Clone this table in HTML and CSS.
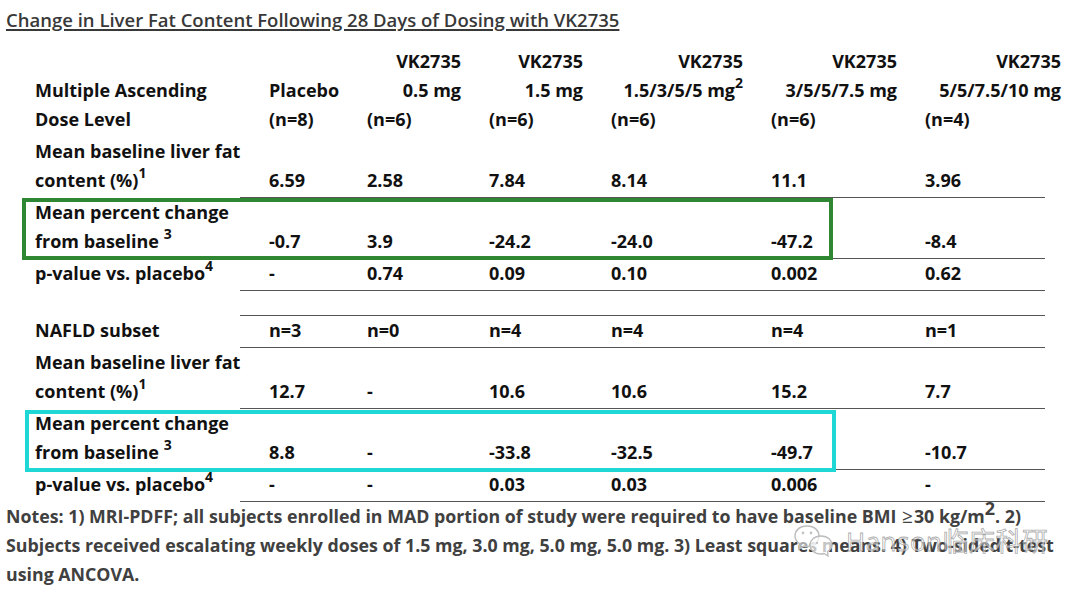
FILE: index.html
```html
<!DOCTYPE html>
<html>
<head>
<meta charset="utf-8">
<link rel="stylesheet" href="styles.css">
</head>
<body>
<div class="page">
  <div class="title">Change in Liver Fat Content Following 28 Days of Dosing with VK2735</div>

  <div class="table">
    <div class="row head">
      <div class="cell label"><div class="blank"></div>Multiple Ascending<br>Dose Level</div>
      <div class="cell"><div class="blank"></div>Placebo<br>(n=8)</div>
      <div class="cell dose"><div class="r">VK2735<br>0.5 mg</div>(n=6)</div>
      <div class="cell dose"><div class="r">VK2735<br>1.5 mg</div>(n=6)</div>
      <div class="cell dose"><div class="r">VK2735<br>1.5/3/5/5 mg<span class="sup">2</span></div>(n=6)</div>
      <div class="cell dose"><div class="r">VK2735<br>3/5/5/7.5 mg</div>(n=6)</div>
      <div class="cell dose last"><div class="r">VK2735<br>5/5/7.5/10 mg</div>(n=4)</div>
    </div>

    <div class="row two gap">
      <div class="cell label">Mean baseline liver fat<br>content (%)<span class="sup">1</span></div>
      <div class="cell">6.59</div>
      <div class="cell">2.58</div>
      <div class="cell">7.84</div>
      <div class="cell">8.14</div>
      <div class="cell">11.1</div>
      <div class="cell">3.96</div>
    </div>
    <div class="rule"></div>

    <div class="row two boxed">
      <span class="box green"></span>
      <div class="cell label">Mean percent change<br>from baseline <span class="sup">3</span></div>
      <div class="cell">-0.7</div>
      <div class="cell">3.9</div>
      <div class="cell">-24.2</div>
      <div class="cell">-24.0</div>
      <div class="cell">-47.2</div>
      <div class="cell">-8.4</div>
    </div>
    <div class="rule"></div>

    <div class="row">
      <div class="cell label">p-value vs. placebo<span class="sup">4</span></div>
      <div class="cell">-</div>
      <div class="cell">0.74</div>
      <div class="cell">0.09</div>
      <div class="cell">0.10</div>
      <div class="cell">0.002</div>
      <div class="cell">0.62</div>
    </div>
    <div class="rule"></div>

    <div class="spacer"></div>
    <div class="rule"></div>

    <div class="row">
      <div class="cell label">NAFLD subset</div>
      <div class="cell">n=3</div>
      <div class="cell">n=0</div>
      <div class="cell">n=4</div>
      <div class="cell">n=4</div>
      <div class="cell">n=4</div>
      <div class="cell">n=1</div>
    </div>
    <div class="rule"></div>

    <div class="row two">
      <div class="cell label">Mean baseline liver fat<br>content (%)<span class="sup">1</span></div>
      <div class="cell">12.7</div>
      <div class="cell">-</div>
      <div class="cell">10.6</div>
      <div class="cell">10.6</div>
      <div class="cell">15.2</div>
      <div class="cell">7.7</div>
    </div>
    <div class="rule"></div>

    <div class="row two boxed">
      <span class="box cyan"></span>
      <div class="cell label">Mean percent change<br>from baseline <span class="sup">3</span></div>
      <div class="cell">8.8</div>
      <div class="cell">-</div>
      <div class="cell">-33.8</div>
      <div class="cell">-32.5</div>
      <div class="cell">-49.7</div>
      <div class="cell">-10.7</div>
    </div>
    <div class="rule"></div>

    <div class="row">
      <div class="cell label">p-value vs. placebo<span class="sup">4</span></div>
      <div class="cell">-</div>
      <div class="cell">-</div>
      <div class="cell">0.03</div>
      <div class="cell">0.03</div>
      <div class="cell">0.006</div>
      <div class="cell">-</div>
    </div>
    <div class="rule"></div>
  </div>

  <div class="notes">
    <div>Notes: 1) MRI-PDFF; all subjects enrolled in MAD portion of study were required to have baseline BMI <span class="ge">≥</span>30 kg/m<span class="sup">2</span>. 2)</div>
    <div>Subjects received escalating weekly doses of 1.5 mg, 3.0 mg, 5.0 mg, 5.0 mg. 3) Least squares means. 4) Two-sided t-test</div>
    <div>using ANCOVA.</div>
    <div class="watermark">
      <svg class="wx" width="46" height="34" viewBox="0 0 46 34">
        <path d="M13 2 C5 2 1 7 1 12 C1 15 3 18 6 20 L5 25 L10 22 C11 22.4 12 22.6 13 22.6 C21 22.6 25 17.5 25 12 C25 7 21 2 13 2 Z" fill="rgba(255,255,255,0.55)" stroke="#bdbdbd" stroke-width="1.4"/>
        <path d="M27 12 C20 12 16 16.5 16 21 C16 25.5 20 30 27 30 C28 30 29 29.8 30 29.5 L34 32 L33.5 27.5 C36 26 38 23.5 38 21 C38 16.5 34 12 27 12 Z" fill="rgba(255,255,255,0.7)" stroke="#bdbdbd" stroke-width="1.4"/>
        <circle cx="9" cy="9" r="1.4" fill="#c4c4c4"/>
        <circle cx="17" cy="9" r="1.4" fill="#c4c4c4"/>
        <circle cx="23" cy="19" r="1.2" fill="#c4c4c4"/>
        <circle cx="31" cy="19" r="1.2" fill="#c4c4c4"/>
      </svg>
      <span class="wm-text">Hanson临床科研</span>
    </div>
  </div>
</div>
</body>
</html>
```

FILE: styles.css
```css
* { box-sizing: border-box; }
html, body { margin: 0; padding: 0; background: #ffffff; }
body {
  width: 1080px;
  height: 592px;
  overflow: hidden;
  font-family: "Open Sans", "Noto Sans", sans-serif;
  font-weight: 700;
  color: #111111;
}
.title {
  padding: 9px 0 0 6px;
  font-size: 18.5px;
  line-height: 22px;
  font-weight: 600;
  color: #383838;
  text-decoration: underline;
  text-underline-offset: 2px;
  text-decoration-thickness: 1.5px;
}
.table {
  margin: 16px 0 0 35px;
  width: 1026px;
}
.row {
  display: grid;
  grid-template-columns: 234px 98px 122px 122px 160px 154px 136px;
  font-size: 18px;
  line-height: 29px;
  padding-bottom: 1.5px;
  position: relative;
}
.row.gap { margin-top: 3px; }
.row.two .cell { align-self: end; }
.row.two .cell.label { align-self: start; }
.head { padding-bottom: 0; }
.blank { height: 29px; }
.dose .r {
  text-align: right;
  padding-right: 28px;
}
.dose.last .r { padding-right: 0; }
.cell { white-space: nowrap; }
.sup {
  font-size: 14px;
  line-height: 0;
  vertical-align: 9px;
}
.rule {
  margin-left: 205px;
  width: 805px;
  height: 1.5px;
  background: #555555;
}
.spacer { height: 23.5px; }
.box {
  position: absolute;
  pointer-events: none;
  border-style: solid;
  border-width: 4.5px;
}
.box.green {
  left: -13px;
  top: 0;
  width: 811px;
  height: 62px;
  border-color: #2f8733;
}
.box.cyan {
  left: -10px;
  top: 1px;
  width: 811px;
  height: 62px;
  border-color: #1fd8d6;
}
.notes {
  position: relative;
  padding-left: 6px;
  font-size: 17.8px;
  line-height: 29px;
  color: #404040;
  white-space: nowrap;
}
.notes .sup { font-size: 18px; vertical-align: 8px; }
.ge { font-weight: 400; font-size: 19px; padding: 0 1px; }
.watermark {
  position: absolute;
  left: 794px;
  top: 22px;
  display: flex;
  align-items: center;
  gap: 6px;
  line-height: 30px;
}
.wm-text {
  font-family: "Open Sans", "Noto Sans CJK SC", sans-serif;
  font-weight: 400;
  font-size: 26px;
  color: rgba(255, 255, 255, 0.55);
  -webkit-text-stroke: 0.8px rgba(140, 140, 140, 0.75);
  letter-spacing: 0.5px;
}
```
